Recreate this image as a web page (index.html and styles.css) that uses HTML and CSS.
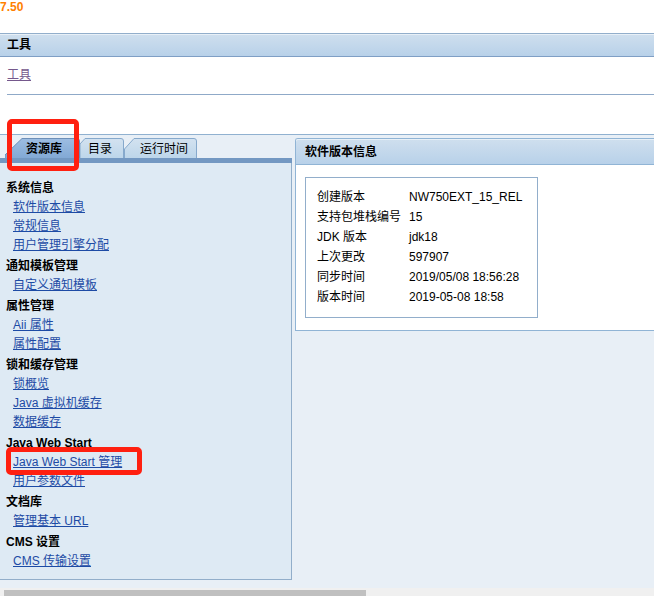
FILE: index.html
```
<!DOCTYPE html>
<html lang="zh-CN">
<head>
    <meta charset="UTF-8">
    <meta name="viewport" content="width=device-width, initial-scale=1.0">
    <title>工具</title>
    <link rel="stylesheet" href="styles.css">
</head>
<body>
    <div class="version">7.50</div>
    <h2 class="bar">工具</h2>
    <div class="tools"><a href="#">工具</a></div>

    <main class="content">
        <section class="left">
            <div class="tabs">
                <button type="button" class="tab tab-active marked">
                    <svg class="tab-shape" width="75" height="20" viewBox="0 0 75 20">
                        <defs>
                            <linearGradient id="active" x1="0" y1="0" x2="0" y2="1">
                                <stop offset="0" stop-color="#9dbde2"/>
                                <stop offset="1" stop-color="#82a9d5"/>
                            </linearGradient>
                            <linearGradient id="normal" x1="0" y1="0" x2="0" y2="1">
                                <stop offset="0" stop-color="#d3e2f0"/>
                                <stop offset="1" stop-color="#bdd6ea"/>
                            </linearGradient>
                        </defs>
                        <path d="M0 20V17L17 .5H72Q74.500 .5 74.500 3V20" fill="url(#active)" stroke="#6c8fb8"/>
                    </svg>
                    资源库
                </button>
                <button type="button" class="tab tab-second">
                    <svg class="tab-shape" width="44" height="20" viewBox="0 0 44 20">
                        <path d="M0 20V6L5 .5H41Q43.500 .5 43.500 3V20" fill="url(#normal)" stroke="#86a9cc"/>
                    </svg>
                    目录
                </button>
                <button type="button" class="tab tab-third">
                    <svg class="tab-shape" width="73" height="20" viewBox="0 0 73 20">
                        <path d="M.5 20V11L10 .5H70Q72.500 .5 72.500 3V20" fill="url(#normal)" stroke="#86a9cc"/>
                    </svg>
                    运行时间
                </button>
            </div>
            <nav class="menu">
                <h3>系统信息</h3>
                <ul>
                    <li><a href="#">软件版本信息</a></li>
                    <li><a href="#">常规信息</a></li>
                    <li><a href="#">用户管理引擎分配</a></li>
                </ul>
                <h3>通知模板管理</h3>
                <ul>
                    <li><a href="#">自定义通知模板</a></li>
                </ul>
                <h3>属性管理</h3>
                <ul>
                    <li><a href="#">Aii 属性</a></li>
                    <li><a href="#">属性配置</a></li>
                </ul>
                <h3>锁和缓存管理</h3>
                <ul>
                    <li><a href="#">锁概览</a></li>
                    <li><a href="#">Java 虚拟机缓存</a></li>
                    <li><a href="#">数据缓存</a></li>
                </ul>
                <h3>Java Web Start</h3>
                <ul>
                    <li class="marked"><a href="#">Java Web Start 管理</a></li>
                    <li><a href="#">用户参数文件</a></li>
                </ul>
                <h3>文档库</h3>
                <ul>
                    <li><a href="#">管理基本 URL</a></li>
                </ul>
                <h3>CMS 设置</h3>
                <ul>
                    <li><a href="#">CMS 传输设置</a></li>
                </ul>
            </nav>
        </section>

        <section class="right">
            <h2 class="panel-title">软件版本信息</h2>
            <div class="panel-body">
                <table class="info">
                    <tr><th scope="row">创建版本</th><td>NW750EXT_15_REL</td></tr>
                    <tr><th scope="row">支持包堆栈编号</th><td>15</td></tr>
                    <tr><th scope="row">JDK 版本</th><td>jdk18</td></tr>
                    <tr><th scope="row">上次更改</th><td>597907</td></tr>
                    <tr><th scope="row">同步时间</th><td>2019/05/08 18:56:28</td></tr>
                    <tr><th scope="row">版本时间</th><td>2019-05-08 18:58</td></tr>
                </table>
            </div>
        </section>
    </main>
    <div class="scrollbar"><div class="thumb"></div></div>
</body>
</html>
```
FILE: styles.css
```
* {
    box-sizing: border-box;
}
body {
    margin: 0;
    min-height: 100vh;
    display: flex;
    flex-direction: column;
    overflow: hidden;
    background: #fff;
    color: #000;
    font-family: "Liberation Sans", Arial, "Noto Sans CJK SC", sans-serif;
    font-size: 12px;
    line-height: 20px;
}
h2, h3, ul {
    margin: 0;
    padding: 0;
    font-size: 12px;
}
ul {
    list-style: none;
}
a {
    color: #1d4ba5;
}
.version {
    height: 33px;
    line-height: 15px;
    font-weight: bold;
    color: #ff8000;
}
.bar {
    padding: 0 7px;
    line-height: 22px;
    border-top: 1px solid #92aecb;
    border-bottom: 1px solid #7f9fc5;
    background: linear-gradient(#cfdfee, #b8d1e9);
    box-shadow: inset 0 1px #e8f0f7;
}
.tools {
    margin: 0 0 39px 7px;
    padding: 8px 0 9px;
    border-bottom: 1px solid #8fa9c8;
}
.tools a {
    color: #75588c;
}
.content {
    flex: 1;
    display: flex;
    align-items: flex-start;
    gap: 3px;
    padding-top: 3px;
    border-top: 1px solid #90b1d0;
    background: #e8eff6;
}
.left {
    flex: 0 0 292px;
}
.tabs {
    display: flex;
    padding-left: 5px;
    height: 25px;
    border-bottom: 5px solid #7398c2;
}
.tab {
    position: relative;
    z-index: 0;
    height: 20px;
    padding: 2px 0 0;
    border: none;
    background: none;
    color: #000;
    font: inherit;
    line-height: 18px;
    text-align: left;
    white-space: nowrap;
    cursor: pointer;
}
.tab-shape {
    position: absolute;
    top: 0;
    left: 0;
    z-index: -1;
}
.tab-active {
    width: 75px;
    padding-left: 21px;
    font-weight: bold;
}
.tab-second {
    width: 44px;
    padding-left: 8px;
}
.tab-third {
    width: 73px;
    padding-left: 16px;
}
.menu {
    padding: 16px 6px 8px;
    border: solid #92aeca;
    border-width: 0 1px 1px 0;
    background: #deeaf4;
    line-height: 19px;
}
.menu ul {
    margin-bottom: 2px;
    padding-left: 7px;
}
.menu ul:last-child {
    margin-bottom: 0;
}

/* red frames round the steps to follow */
.marked {
    position: relative;
    z-index: 1;
}
.marked::after {
    content: "";
    position: absolute;
    border: 5px solid #ff2010;
    border-radius: 5px;
    pointer-events: none;
}
.tab.marked::after {
    inset: -19px 1px -13px 2px;
}
li.marked {
    width: 122px;
}
li.marked::after {
    inset: -6px -7px -3px -7px;
}

.right {
    flex: 1;
    border: solid #90b4d5;
    border-width: 1px 0 1px 1px;
    border-top-left-radius: 3px;
    background: #fff;
}
.panel-title {
    padding: 1px 9px 0;
    line-height: 24px;
    border-bottom: 1px solid #90b4d5;
    border-top-left-radius: 2px;
    background: linear-gradient(#cfdfee, #b8d1e9);
    box-shadow: inset 0 1px #e8f0f7;
}
.panel-body {
    padding: 12px 9px;
}
.info {
    width: 233px;
    padding: 9px 11px 10px;
    border: 1px solid #92aecb;
    border-spacing: 0;
}
.info th {
    width: 92px;
    padding: 0;
    font-weight: normal;
    text-align: left;
    white-space: nowrap;
}
.info td {
    padding: 0;
    white-space: nowrap;
}
.scrollbar {
    height: 8px;
    padding: 2px 4px 0;
    background: #f0f0f0;
}
.thumb {
    width: 56%;
    height: 6px;
    background: #c0c0c0;
}
```
